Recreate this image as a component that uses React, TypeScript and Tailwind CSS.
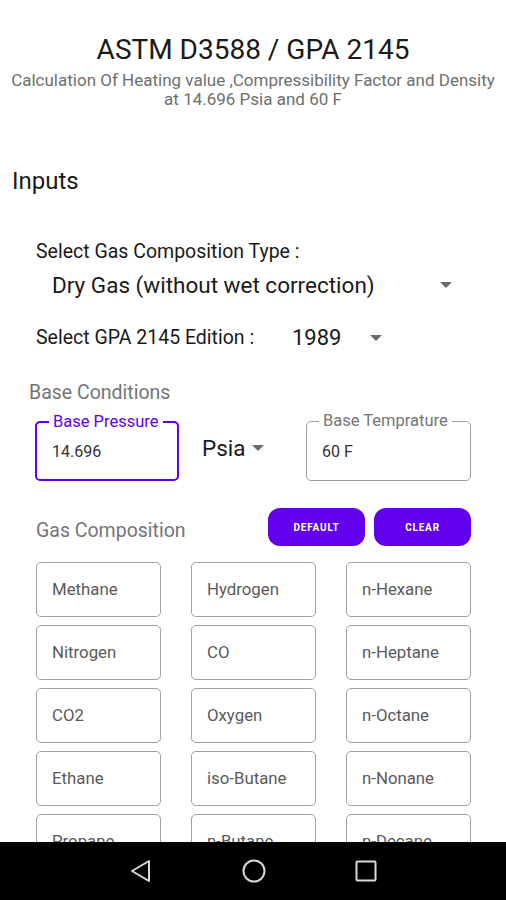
import { ReactNode } from "react";

const COMPONENTS = [
  "Methane", "Hydrogen", "n-Hexane",
  "Nitrogen", "CO", "n-Heptane",
  "CO2", "Oxygen", "n-Octane",
  "Ethane", "iso-Butane", "n-Nonane",
  "Propane", "n-Butane", "n-Decane",
];

function Caret({ className = "" }: { className?: string }) {
  return (
    <svg width="12" height="6" viewBox="0 0 12 6" className={className}>
      <path d="M0 0 L12 0 L6 6 Z" fill="#6b6b6b" />
    </svg>
  );
}

function Outlined({
  label,
  value,
  focused,
  className = "",
}: {
  label: string;
  value: ReactNode;
  focused?: boolean;
  className?: string;
}) {
  return (
    <div
      className={`relative h-[60px] rounded-[5px] ${
        focused ? "border-2 border-[#6200ee]" : "border border-[#9e9e9e]"
      } ${className}`}
    >
      <span
        className={`absolute left-[12px] top-[-12px] bg-white px-[4px] text-[16.5px] leading-[22px] ${
          focused ? "text-[#6200ee]" : "text-[#757575]"
        }`}
      >
        {label}
      </span>
      <div className="flex h-full items-center pl-[15px] pt-[2px] text-[16px] text-[#333]">{value}</div>
    </div>
  );
}

export default function App() {
  return (
    <div
      className="relative h-[900px] w-[506px] overflow-hidden bg-white"
      style={{ fontFamily: "Roboto, 'Noto Sans', sans-serif" }}
    >
      {/* Header */}
      <header className="pt-[35px] text-center">
        <h1 className="text-[28px] leading-[30px] text-[#1a1a1a]">ASTM D3588 / GPA 2145</h1>
        <p className="mt-[6px] text-[17px] leading-[19px] text-[#6f6f6f]">
          Calculation Of Heating value ,Compressibility Factor and Density
          <br />
          at 14.696 Psia and 60 F
        </p>
      </header>

      <h2 className="mt-[58px] pl-[12px] text-[24px] leading-[28px] text-[#1a1a1a]">Inputs</h2>

      <div className="px-[36px]">
        <p className="mt-[46px] text-[19.5px] leading-[22px] text-[#1a1a1a]">Select Gas Composition Type :</p>
        <div className="mt-[9px] flex items-center pl-[16px] pr-[18px]">
          <span className="flex-1 text-[22.5px] leading-[26px] text-[#1a1a1a]">
            Dry Gas (without wet correction)
          </span>
          <Caret />
        </div>

        <div className="mt-[27px] flex items-center text-[#1a1a1a]">
          <span className="w-[256px] text-[19.5px] leading-[26px]">Select GPA 2145 Edition :</span>
          <span className="w-[78px] text-[22px] leading-[26px]">1989</span>
          <Caret />
        </div>
      </div>

      <p className="mt-[31px] pl-[29px] text-[19.5px] leading-[22px] text-[#757575]">Base Conditions</p>

      <div className="mt-[17px] flex items-center px-[35px]">
        <Outlined label="Base Pressure" value="14.696" focused className="w-[144px]" />
        <div className="mb-[6px] ml-[23px] flex w-[104px] items-center gap-[6px]">
          <span className="text-[22.5px] leading-[26px] text-[#1a1a1a]">Psia</span>
          <Caret />
        </div>
        <Outlined label="Base Temprature" value="60 F" className="w-[165px]" />
      </div>

      <div className="mt-[27px] flex items-center pl-[36px] pr-[35px]">
        <span className="mt-[8px] flex-1 text-[19.5px] leading-[22px] text-[#757575]">Gas Composition</span>
        <div className="flex gap-[9px]">
          <button className="h-[38px] w-[97px] rounded-[12px] bg-[#6200ee] text-[10px] font-bold tracking-[0.08em] text-white">
            DEFAULT
          </button>
          <button className="h-[38px] w-[97px] rounded-[12px] bg-[#6200ee] text-[10px] font-bold tracking-[0.08em] text-white">
            CLEAR
          </button>
        </div>
      </div>

      <div className="mt-[16px] grid grid-cols-3 gap-x-[30px] gap-y-[8px] pl-[36px] pr-[35px]">
        {COMPONENTS.map((c) => (
          <div
            key={c}
            className="flex h-[55px] items-center rounded-[5px] border border-[#a0a0a0] pl-[15px] text-[16.8px] text-[#5a5a5a]"
          >
            {c}
          </div>
        ))}
      </div>

      {/* Android navigation bar */}
      <nav className="absolute bottom-0 left-0 flex h-[58px] w-full items-center bg-black">
        <div className="flex w-full items-center justify-between pl-[129px] pr-[128px]">
          <svg width="24" height="24" viewBox="0 0 24 24">
            <path d="M20 2 L20 22 L3 12 Z" fill="none" stroke="#d9d9d9" strokeWidth="2" strokeLinejoin="round" />
          </svg>
          <svg width="24" height="24" viewBox="0 0 24 24">
            <circle cx="12" cy="12" r="10.5" fill="none" stroke="#d9d9d9" strokeWidth="2" />
          </svg>
          <svg width="24" height="24" viewBox="0 0 24 24">
            <rect x="2.5" y="2.5" width="19" height="19" rx="1" fill="none" stroke="#d9d9d9" strokeWidth="2" />
          </svg>
        </div>
      </nav>
    </div>
  );
}
